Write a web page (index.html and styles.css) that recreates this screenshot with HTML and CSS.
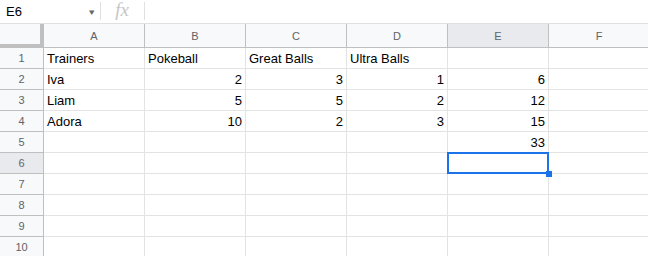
FILE: index.html
```html
<!DOCTYPE html>
<html>
<head>
<meta charset="utf-8">
<link rel="stylesheet" href="styles.css">
</head>
<body>
<div class="app">
  <div class="formula-bar">
    <div class="name-box"><span class="name">E6</span><span class="caret">▾</span></div>
    <div class="fx">fx</div>
    <div class="formula-input"></div>
  </div>
  <div class="sheet">
    <div class="corner"></div>
    <div class="colh">A</div><div class="colh">B</div><div class="colh">C</div><div class="colh">D</div><div class="colh sel">E</div><div class="colh">F</div>

    <div class="rowh">1</div>
    <div class="cell">Trainers</div><div class="cell">Pokeball</div><div class="cell">Great Balls</div><div class="cell">Ultra Balls</div><div class="cell"></div><div class="cell"></div>

    <div class="rowh">2</div>
    <div class="cell">Iva</div><div class="cell num">2</div><div class="cell num">3</div><div class="cell num">1</div><div class="cell num">6</div><div class="cell"></div>

    <div class="rowh">3</div>
    <div class="cell">Liam</div><div class="cell num">5</div><div class="cell num">5</div><div class="cell num">2</div><div class="cell num">12</div><div class="cell"></div>

    <div class="rowh">4</div>
    <div class="cell">Adora</div><div class="cell num">10</div><div class="cell num">2</div><div class="cell num">3</div><div class="cell num">15</div><div class="cell"></div>

    <div class="rowh">5</div>
    <div class="cell"></div><div class="cell"></div><div class="cell"></div><div class="cell"></div><div class="cell num">33</div><div class="cell"></div>

    <div class="rowh sel">6</div>
    <div class="cell"></div><div class="cell"></div><div class="cell"></div><div class="cell"></div><div class="cell active"><span class="handle"></span></div><div class="cell"></div>

    <div class="rowh">7</div>
    <div class="cell"></div><div class="cell"></div><div class="cell"></div><div class="cell"></div><div class="cell"></div><div class="cell"></div>

    <div class="rowh">8</div>
    <div class="cell"></div><div class="cell"></div><div class="cell"></div><div class="cell"></div><div class="cell"></div><div class="cell"></div>

    <div class="rowh">9</div>
    <div class="cell"></div><div class="cell"></div><div class="cell"></div><div class="cell"></div><div class="cell"></div><div class="cell"></div>

    <div class="rowh">10</div>
    <div class="cell"></div><div class="cell"></div><div class="cell"></div><div class="cell"></div><div class="cell"></div><div class="cell"></div>
  </div>
</div>
</body>
</html>
```

FILE: styles.css
```css
* { box-sizing: border-box; }
html, body { margin: 0; padding: 0; background: #fff; overflow: hidden; }
.app { width: 648px; height: 256px; overflow: hidden; font-family: Arial, "Liberation Sans", sans-serif; }

.formula-bar {
  height: 24px;
  display: flex;
  align-items: stretch;
  border-bottom: 1px solid #e0e0e0;
}
.name-box {
  width: 101px;
  display: flex;
  align-items: center;
  justify-content: space-between;
  padding: 0 7px 0 6px;
  position: relative;
}
.name-box::after, .fx::after {
  content: "";
  position: absolute;
  right: 0;
  top: 2px;
  bottom: 3px;
  width: 1px;
  background: #e0e0e0;
}
.name { font-size: 13px; color: #000; }
.caret { font-size: 9px; color: #666; transform: scaleX(1.2); }
.fx {
  width: 44px;
  position: relative;
  display: flex;
  align-items: center;
  justify-content: center;
  font-family: "Liberation Serif", "DejaVu Serif", serif;
  font-style: italic;
  font-size: 19px;
  color: #c6c6c6;
  padding-bottom: 3px;
  padding-right: 2px;
}
.formula-input { flex: 1; }

.sheet {
  display: grid;
  grid-template-columns: 44px repeat(6, 101px);
  grid-template-rows: 24px repeat(10, 21px);
}
.corner {
  background: #f8f9fa;
  border-right: 4px solid #c0c0c0;
  border-bottom: 4px solid #c0c0c0;
}
.colh {
  background: #f8f9fa;
  border-right: 1px solid #c0c0c0;
  border-bottom: 1px solid #c0c0c0;
  font-size: 11px;
  color: #5f6368;
  display: flex;
  align-items: center;
  justify-content: center;
  padding-top: 1px;
}
.colh.sel, .rowh.sel { background: #e8eaed; }
.rowh {
  background: #f8f9fa;
  border-right: 1px solid #c0c0c0;
  border-bottom: 1px solid #c0c0c0;
  font-size: 11px;
  color: #5f6368;
  display: flex;
  align-items: center;
  justify-content: center;
}
.cell {
  border-right: 1px solid #e2e3e3;
  border-bottom: 1px solid #e2e3e3;
  font-size: 13px;
  color: #000;
  padding: 0 3px;
  display: flex;
  align-items: center;
  white-space: nowrap;
  position: relative;
}
.cell.num { justify-content: flex-end; }
.cell.active::before {
  content: "";
  position: absolute;
  left: -1px;
  top: -1px;
  right: -1px;
  bottom: -1px;
  border: 2px solid #1a73e8;
}
.handle {
  position: absolute;
  right: -4px;
  bottom: -4px;
  width: 6px;
  height: 6px;
  background: #1a73e8;
  z-index: 2;
}
```
